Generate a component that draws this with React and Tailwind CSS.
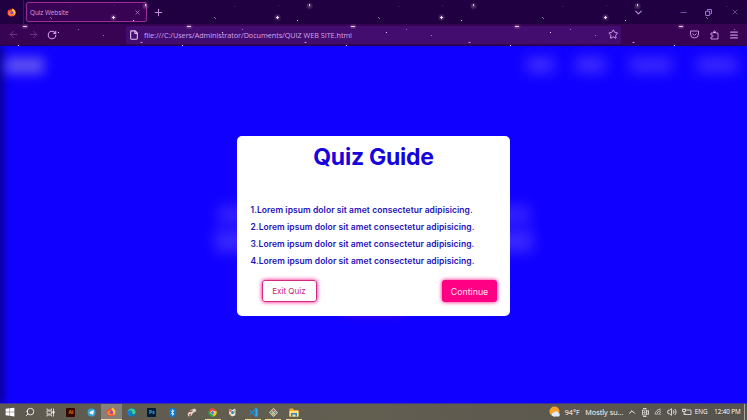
import { ArrowLeft, ArrowRight, RotateCw, File, Star, Minus, X, Plus, ChevronDown, ChevronUp, Copy, Menu, Search, Bluetooth, Volume2, Wifi } from "lucide-react";
import { FaWindows } from "react-icons/fa";

function Firefox({ size }) {
  return (
    <svg width={size} height={size} viewBox="0 0 20 20">
      <path d="M3 4l2 1 2-3 2 2 3-3c4 2 7 5 7 9a9 9 0 0 1-18 0c0-2 1-4 2-6z" fill="#ff443f" />
      <path d="M12 1c4 2 7 5 7 9 0 3-2 6-5 7 2-5 1-8-3-11z" fill="#ffc53a" />
      <circle cx="10" cy="11" r="4" fill="#8b41d5" />
      <path d="M3 9c3-3 6-2 7 0-3 0-4 2-2 4 2 1 5 1 7-1-1 4-5 6-9 4-2-1-4-4-3-7z" fill="#ff8b24" />
    </svg>
  );
}

function Sky() {
  return (
    <svg className="pointer-events-none absolute left-0 top-0" width="747" height="47">
      <defs>
        <radialGradient id="halo">
          <stop offset="0" stopColor="#fff" stopOpacity=".28" />
          <stop offset="0.6" stopColor="#fff" stopOpacity=".12" />
          <stop offset="1" stopColor="#fff" stopOpacity="0" />
        </radialGradient>
        <pattern id="stars" width="164" height="47" patternUnits="userSpaceOnUse">
          <circle cx="113.5" cy="17.5" r="4" fill="url(#halo)" />
          <rect x="113" y="16" width="1" height="3" fill="#f3dcf5" />
          <rect x="112" y="17" width="3" height="1" fill="#f3dcf5" />
          <circle cx="145.500" cy="6" r="4" fill="url(#halo)" />
          <rect x="145" y="4" width="1" height="2" fill="#eac8f5" />
          <ellipse cx="25" cy="26.5" rx="4.500" ry="3" fill="url(#halo)" />
          <rect x="23" y="26" width="4" height="1" fill="#ecc9ed" />
          <rect x="141" y="42" width="1" height="1" fill="#f0cdff" />
          <rect x="140" y="42" width="3" height="1" fill="#b77ad9" opacity=".5" />
          <path d="M50 17l2 2" stroke="#a98abd" strokeWidth=".8" />
          <rect x="133" y="20" width="1" height="1" fill="#dfc4e8" />
          <rect x="58" y="32" width="1" height="1" fill="#eed0ff" />
          <rect x="78" y="29" width="1" height="1" fill="#9e69bf" />
          <rect x="18" y="45" width="1" height="1" fill="#eed0ff" />
          <rect x="103" y="35" width="1" height="1" fill="#a173bb" />
          <rect x="70" y="6" width="1" height="1" fill="#4d2668" />
          <rect x="114" y="5" width="1" height="1" fill="#4d2668" />
        </pattern>
      </defs>
      <rect width="747" height="47" fill="url(#stars)" />
    </svg>
  );
}

function BrowserChrome() {
  return (
    <header className="relative h-[46px] shrink-0 text-[#c68be0]">
      <div className="flex h-6 items-center bg-[#200040]">
        <div className="flex w-[22px] justify-center"><Firefox size={9} /></div>
        <div className="ml-[1px] h-6 w-px bg-[#37174f]" />
        <div className="ml-[2px] flex h-[20px] w-[121px] items-center justify-between rounded-[2px] border border-[#9c2e9c] bg-[#390353] pl-[3px] pr-[5px]">
          <span className="whitespace-nowrap pt-px text-[6.4px] tracking-[-0.05px] text-[#d2a0e5]">Quiz Website</span>
          <X size={7} strokeWidth={2.2} />
        </div>
        <Plus className="ml-[6px]" size={11} strokeWidth={2.2} />
        <ChevronDown className="ml-auto mr-[35.5px]" size={11} strokeWidth={2.4} />
        <Minus className="mr-[17px] text-[#8550b0]" size={9} strokeWidth={2.5} />
        <Copy className="mr-[19px] -scale-x-100 text-[#a275dc]" size={7} strokeWidth={3.5} />
        <X className="mr-[8px] text-[#7a4b9c]" size={8} strokeWidth={2.4} />
      </div>
      <div className="flex h-[22px] items-center border-b border-[#210555] bg-[#390353]">
        <ArrowLeft className="ml-[8px] text-[#77368d]" size={11} strokeWidth={2} />
        <ArrowRight className="ml-[9px] text-[#77368d]" size={11} strokeWidth={2} />
        <RotateCw className="ml-[8px] text-[#d596ec]" size={10} strokeWidth={2.7} />
        <div className="ml-[69px] flex h-[18px] w-[495px] items-center rounded-[2px] bg-[#430c6f]">
          <File className="ml-[3px] text-[#e3c2ee]" size={10} strokeWidth={2.6} />
          <span className="ml-[5px] whitespace-nowrap pt-px text-[7.2px] text-[#d6a5e6]">file:///C:/Users/Administrator/Documents/QUIZ WEB SITE.html</span>
          <Star className="ml-auto mr-[3px] text-[#d5a3e9]" size={10.5} strokeWidth={2.2} />
        </div>
        <svg className="ml-[69px]" width="9" height="9" viewBox="0 0 18 18" fill="none" stroke="currentColor" strokeWidth="2">
          <path d="M1 2h16v6a8 8 0 0 1-16 0zM5 7l4 4 4-4" />
        </svg>
        <svg className="ml-[11px]" width="9" height="10" viewBox="0 0 18 20" fill="none" stroke="currentColor" strokeWidth="2">
          <path d="M2 6h5V4a2 2 0 0 1 4 0v2h5v12H2v-4h2a2 2 0 0 0 0-4H2z" />
        </svg>
        <Menu className="ml-[10px]" size={10} strokeWidth={3} />
      </div>
      <Sky />
    </header>
  );
}

const guides = [
  "1.Lorem ipsum dolor sit amet consectetur adipisicing.",
  "2.Lorem ipsum dolor sit amet consectetur adipisicing.",
  "3.Lorem ipsum dolor sit amet consectetur adipisicing.",
  "4.Lorem ipsum dolor sit amet consectetur adipisicing.",
];

function BlurredPage() {
  return (
    <div className="absolute inset-0 overflow-hidden">
      <div className="absolute -left-2 top-0 h-full w-[11px] bg-[#08007a] blur-[5px]" />
      <div className="absolute left-[5px] top-[11px] h-[17px] w-[39px] bg-[#7164f0] opacity-80 blur-[6px]" />
      <div className="absolute left-[527px] top-[12px] h-[14px] w-[27px] bg-[#4633ff] blur-[7px]" />
      <div className="absolute left-[576px] top-[12px] h-[14px] w-[29px] bg-[#4633ff] blur-[7px]" />
      <div className="absolute left-[630px] top-[12px] h-[14px] w-[42px] bg-[#402dff] blur-[7px]" />
      <div className="absolute left-[697px] top-[12px] h-[14px] w-[40px] bg-[#402dff] blur-[7px]" />
      <div className="absolute left-[218px] top-[159px] h-[20px] w-[312px] bg-[#3d29ff] opacity-80 blur-[7px]" />
      <div className="absolute left-[215px] top-[184px] h-[22px] w-[318px] bg-[#402dff] opacity-90 blur-[7px]" />
      <div className="absolute left-[343px] top-[250px] h-[18px] w-[62px] bg-[#8300c8] opacity-80 blur-[5px]" />
    </div>
  );
}

function Page() {
  return (
    <main className="relative flex flex-1 justify-center bg-[#1000ff]">
      <BlurredPage />
      <section className="relative mt-[90px] h-[180px] w-[273px] rounded-[5px] bg-white font-['Inter','Liberation_Sans',sans-serif]">
        <h1 className="pt-[6px] text-center text-[23px] font-bold leading-[30px] tracking-[-0.25px] text-[#1602dc]">Quiz Guide</h1>
        <div className="ml-[13.5px] mt-[30px]">
          {guides.map((line) => (
            <p key={line} className="h-[17px] whitespace-nowrap text-[8.5px] font-semibold leading-[17px] tracking-[0.07px] text-[#2412b8]">{line}</p>
          ))}
        </div>
        <div className="mt-[10px] flex justify-between pl-[24.5px] pr-[13px]">
          <button className="h-[22px] w-[55px] rounded-[3px] border border-[#d52883] text-[8.1px] leading-[21px] text-[#cc197c] shadow-[0_0_4px_#ff0080]">Exit Quiz</button>
          <button className="h-[22px] w-[55px] rounded-[3px] bg-[#ff0084] text-[8.8px] leading-[23px] text-[#ffe3f1] shadow-[0_0_4px_#ff0080]">Continue</button>
        </div>
      </section>
    </main>
  );
}

function AppTile({ children, active, open }) {
  return (
    <div className={active ? "relative flex h-4 w-[20.25px] shrink-0 items-center justify-center bg-[#858078]" : "relative flex h-4 w-[20.25px] shrink-0 items-center justify-center"}>
      {children}
      {active && <i className="absolute bottom-0 left-0 h-px w-full bg-[#f5dc94]" />}
      {open && <i className="absolute bottom-0 left-[2px] h-px w-4 bg-[#f5dc94]" />}
    </div>
  );
}

function Taskbar() {
  return (
    <footer className="relative flex h-4 shrink-0 items-center bg-gradient-to-r from-[#5e5a50] via-[#625e50] to-[#55524e] text-white shadow-[0_-1px_0_#40309b]">
      <AppTile><FaWindows size={10} /></AppTile>
      <AppTile><Search size={10} strokeWidth={2} className="-scale-x-100" /></AppTile>
      <AppTile>
        <svg width="9" height="9" viewBox="0 0 18 18" fill="none" stroke="#eee" strokeWidth="1.600"><path d="M2 1v3h9V1M2 17v-3h9v3M2 6h9v6H2zM15 1v16" /><path d="M13.500 7h3v3h-3z" fill="#eee" /></svg>
      </AppTile>
      <AppTile><span className="flex h-[9px] w-[9px] items-center justify-center rounded-[1px] bg-[#320800] text-[5px] font-bold leading-none text-[#f26b1c]">Ai</span></AppTile>
      <AppTile>
        <svg width="9" height="9" viewBox="0 0 18 18"><circle cx="9" cy="9" r="8" fill="#37a4dc" /><path d="M3 9l11-5-2 10-4-3-1 2-1-4z" fill="#fff" /></svg>
      </AppTile>
      <AppTile active><Firefox size={10} /></AppTile>
      <AppTile>
        <svg width="9" height="9" viewBox="0 0 18 18"><circle cx="9" cy="9" r="8.500" fill="#0b75bb" /><path d="M1 8C3-2 18-1 17 9c-1 4-5 4-7 3 3-4-2-7-5-5-2 0-3 1-4 1z" fill="#3bcf98" /><path d="M1 7c4-4 8-3 9 0-4 1-4 6 1 9C4 18-1 13 1 7z" fill="#147ed0" /></svg>
      </AppTile>
      <AppTile><span className="flex h-[9px] w-[9px] items-center justify-center rounded-[1px] bg-[#001d33] text-[5px] font-bold leading-none text-[#36a8f3]">Ps</span></AppTile>
      <AppTile><span className="flex h-[9px] w-[7px] items-center justify-center rounded-[3px] bg-[#087bd6]"><Bluetooth size={7} strokeWidth={2.5} /></span></AppTile>
      <AppTile>
        <svg width="10" height="9" viewBox="0 0 20 18"><path d="M1 12l6-8 9-3 3 5-7 4-3 5-6 2z" fill="#ddd8d5" /><path d="M5 5h7l-2 3H3zM4 13l3-2 1 3-3 2z" fill="#b5473f" /></svg>
      </AppTile>
      <AppTile open>
        <svg width="9" height="9" viewBox="0 0 18 18"><circle cx="9" cy="9" r="8.500" fill="#2ba24c" /><path d="M1.500 5A8.500 8.500 0 0 1 17 6H9L6 11z" fill="#eb4032" /><path d="M9 6h8c2 6-2 11-8 11l4-7z" fill="#fbc116" /><circle cx="9" cy="9" r="4" fill="#fff" /><circle cx="9" cy="9" r="3" fill="#3478e5" /></svg>
      </AppTile>
      <AppTile>
        <svg width="9" height="9" viewBox="0 0 18 18"><path d="M3 2l6 2 5-3 2 6-2 8-6 2-6-5z" fill="#e7e7e1" /><path d="M3 3l5 2-4 3z" fill="#db3e37" /><path d="M12 4l4 3-2 5z" fill="#58a638" /><circle cx="9" cy="9" r="3" fill="#4778ba" /><path d="M3 11l3 2-1 2z" fill="#dda331" /></svg>
      </AppTile>
      <AppTile open>
        <svg width="9" height="9" viewBox="0 0 18 18"><path d="M13 0l4 2v14l-4 2-7-7-4 3-2-1 5-4-5-4 2-1 4 3zm0 5L8 9l5 4z" fill="#198cce" /><path d="M13 0l4 2v14l-4 2z" fill="#31a8ef" /></svg>
      </AppTile>
      <AppTile open>
        <svg width="9" height="9" viewBox="0 0 18 18"><path d="M9 0l9 9-9 9-9-9z" fill="#d8d6ce" /><path d="M9 2l3 3-3 3-3-3z" fill="#c65242" /><path d="M13 6l3 3-3 3-3-3z" fill="#5987a9" /><path d="M5 6l3 3-3 3-3-3z" fill="#659b58" /><path d="M9 10l3 3-3 3-3-3z" fill="#bca13b" /></svg>
      </AppTile>
      <AppTile open>
        <svg width="10" height="9" viewBox="0 0 20 18"><path d="M1 1h7l2 3h9v13H1z" fill="#e9ae2b" /><path d="M1 6h18v11H1z" fill="#ffe27d" /><path d="M4 10h12v7h-3v-4H7v4H4z" fill="#3484c8" /></svg>
      </AppTile>
      <svg className="ml-[245px] shrink-0" width="12" height="12" viewBox="0 0 24 24"><circle cx="11" cy="11" r="10" fill="#f7a329" /><path d="M9 21a4 4 0 0 1 1-8 5 5 0 0 1 9 1 4 4 0 0 1 1 7z" fill="#dceafa" /></svg>
      <div className="ml-[4px] w-[20.5px] shrink-0 whitespace-nowrap pt-px text-[7.2px]">94°F</div>
      <div className="w-[41.5px] shrink-0 whitespace-nowrap pt-px text-[7.3px]">Mostly su...</div>
      <div className="flex w-[65px] shrink-0 items-center justify-between">
        <ChevronUp size={10} strokeWidth={2.3} />
        <svg width="8" height="9" viewBox="0 0 16 18" fill="none" stroke="#eee" strokeWidth="1.600"><path d="M4 1h7M3 4h8v10H3zM11 7l4-2v8l-4-2M4 17h7" /><circle cx="7" cy="9" r="1.500" /></svg>
        <Wifi size={9} strokeWidth={2} className="-rotate-45 text-[#ddd]" />
        <Volume2 size={10} strokeWidth={2} />
        <svg width="10" height="8" viewBox="0 0 20 16" fill="none" stroke="#eee" strokeWidth="1.600"><path d="M8 4h10v9H6v-3M1 3h6v4H1zM2 1v2M6 1v2M4 7v6h2" /></svg>
      </div>
      <div className="ml-[3px] w-[19.5px] shrink-0 text-[6.3px]">ENG</div>
      <div className="w-[28px] shrink-0 whitespace-nowrap text-[6.3px] tracking-[-0.1px]">12:40 PM</div>
      <div className="ml-auto mr-[2px] h-4 w-px bg-[#aaa59b]" />
    </footer>
  );
}

export default function App() {
  return (
    <div className="flex h-[420px] w-[747px] flex-col overflow-hidden font-['Open_Sans','Noto_Sans',sans-serif]">
      <BrowserChrome />
      <Page />
      <Taskbar />
    </div>
  );
}
